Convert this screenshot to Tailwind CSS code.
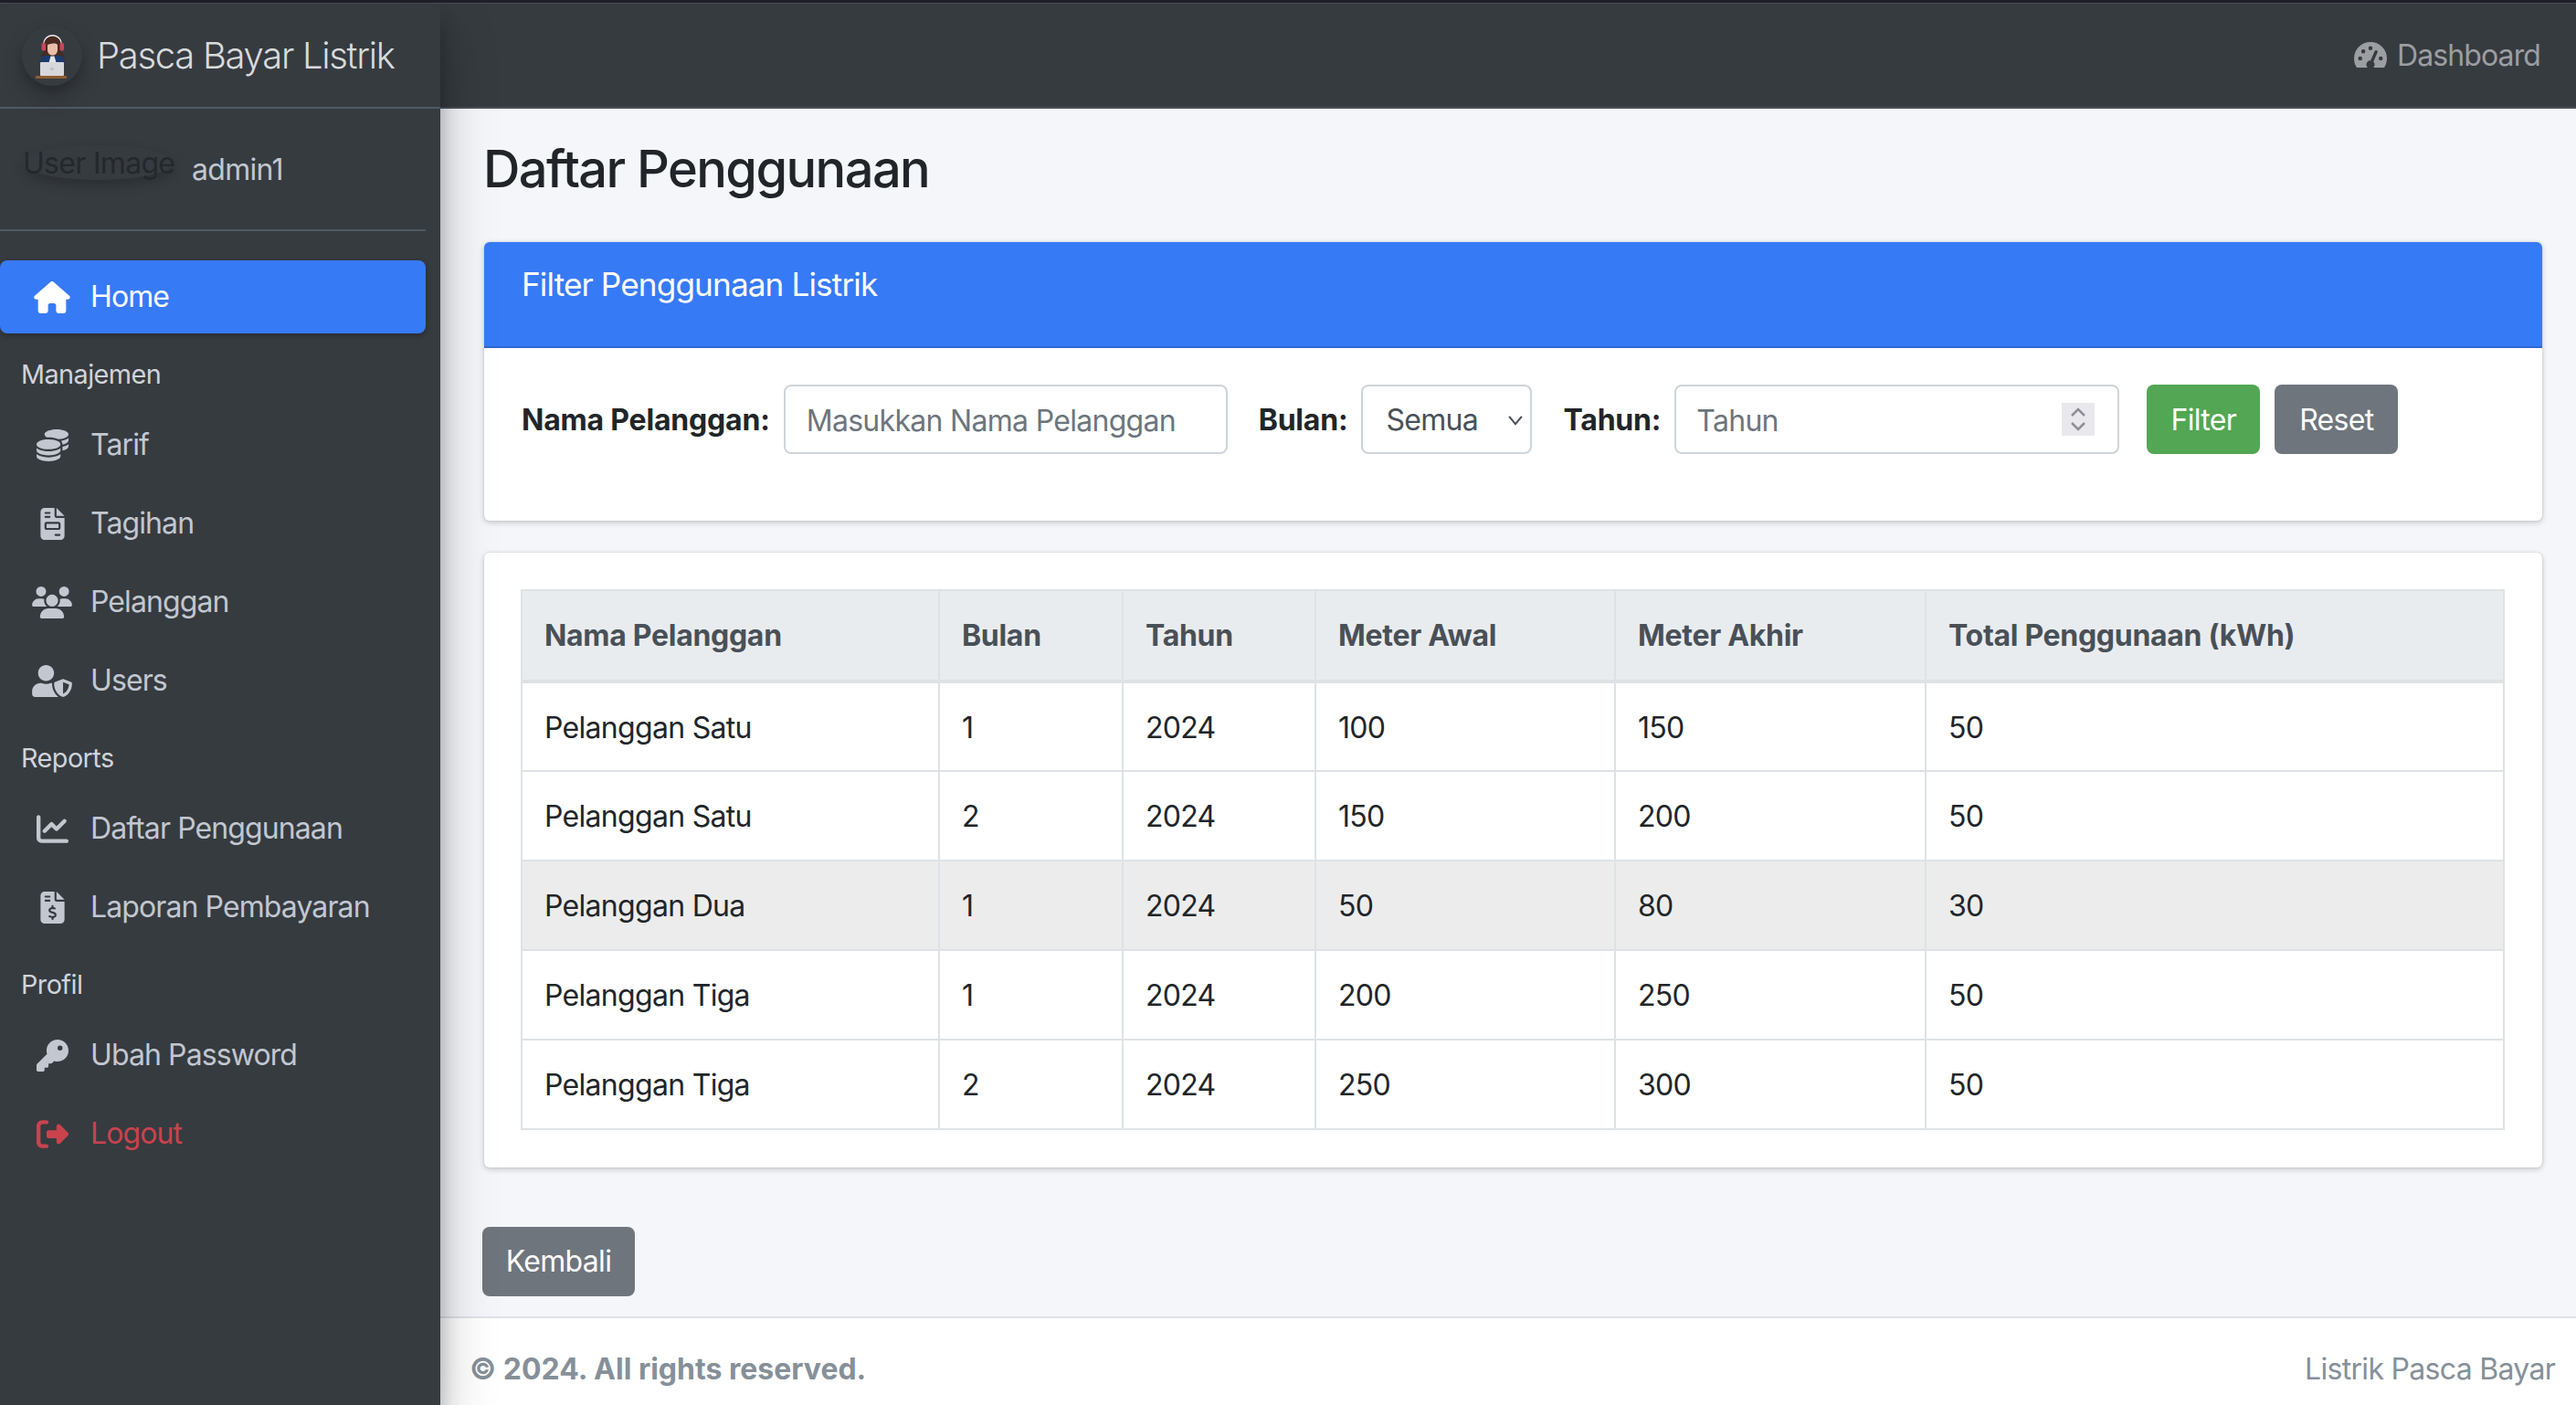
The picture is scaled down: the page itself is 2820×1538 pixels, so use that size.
<!DOCTYPE html>
<html lang="en">

<head>
  <meta charset="UTF-8">
  <meta name="viewport" content="width=device-width, initial-scale=1.0">
  <title>Daftar Penggunaan</title>
  <script src="https://cdn.jsdelivr.net/npm/@tailwindcss/browser@4"></script>
</head>

<body class="h-screen overflow-hidden flex flex-col bg-[#f4f6f9] text-[32px] leading-[48px] tracking-[-0.7px] text-[#212529] font-[family-name:Inter,sans-serif]">
  <!-- window edge -->
  <div class="h-[4px] shrink-0 bg-[#1f1f29] border-b border-[#4a4d52]"></div>

  <div class="flex flex-1 min-h-0">
    <!-- Sidebar -->
    <aside class="w-[482px] shrink-0 relative z-10 bg-[#363b40] shadow-[0_28px_56px_rgba(0,0,0,.25),0_20px_20px_rgba(0,0,0,.22)]">
      <div class="h-[115px] flex items-center pl-[24px] border-b-2 border-[#4f5962]">
        <div class="w-[66px] h-[66px] rounded-full shadow-[0_12px_24px_rgba(0,0,0,.2),0_6px_8px_rgba(0,0,0,.12)]">
          <svg viewBox="0 0 66 66" class="w-[66px] h-[66px]">
            <circle cx="33.5" cy="20.500" r="10.500" fill="#f1f1f1"/>
            <path d="M24 21a9.500 9.500 0 0 1 19 0v8l4 5-5 1H25l-5-1 4-5z" fill="#4a2a20"/>
            <rect x="21.500" y="19" width="4.500" height="8.500" rx="1.500" fill="#c9455d"/>
            <rect x="41.500" y="19" width="4.500" height="8.500" rx="1.500" fill="#c9455d"/>
            <path d="M28 21c3-1 8-3 11 0v6a5.500 5.500 0 0 1-11 0z" fill="#e9bfa8"/>
            <path d="M22 34c3-2 7-2 11 0 4-2 8-2 12 0l2 7H20z" fill="#1b3a6e"/>
            <path d="M31.500 33.500h4l2 7h-8z" fill="#e4e4e4"/>
            <rect x="20" y="40" width="26" height="15" rx="1" fill="#d6d7da"/>
            <circle cx="33" cy="47.500" r="1.800" fill="#bcbdc1"/>
            <rect x="15" y="55" width="34" height="3" fill="#8d5c31"/>
          </svg>
        </div>
        <span class="ml-[16px] text-[40px] leading-[60px] font-light tracking-[-1.3px] text-[#d9dadb]">Pasca Bayar Listrik</span>
      </div>

      <div class="h-[134px] w-[466px] flex border-b-2 border-[#4f5962] pl-[25px]">
        <div class="mt-[40px] w-[165px] h-[38px] rounded-[50%] shadow-[0_6px_14px_rgba(0,0,0,.22)] text-[#24282c] leading-[40px] whitespace-nowrap">User Image</div>
        <div class="ml-[20px] mt-[43px] text-[#c2c7d0]">admin1</div>
      </div>

      <nav class="mt-[32px] w-[466px] flex flex-col gap-[6px] text-[#c2c7d0] tracking-[-0.9px]">
        <a class="h-[80px] flex items-center rounded-[8px] bg-[#377af6] text-white shadow-[0_2px_6px_rgba(0,0,0,.3)]">
          <span class="w-[84px] ml-[15px] flex justify-center">
            <svg viewBox="0 0 576 512" class="h-[35px] w-[40px] fill-current"><path d="M575.8 255.500c0 18-15 32.100-32 32.100h-32l.7 160.200c0 2.700-.2 5.400-.5 8.100V472c0 22.100-17.900 40-40 40H456c-1.100 0-2.200 0-3.300-.1c-1.400 .1-2.800 .1-4.200 .1H416 392c-22.100 0-40-17.900-40-40V448 384c0-17.700-14.300-32-32-32H256c-17.700 0-32 14.300-32 32v64 24c0 22.100-17.900 40-40 40H160 128.100c-1.500 0-3-.1-4.500-.2c-1.200 .1-2.400 .2-3.600 .2H104c-22.100 0-40-17.900-40-40V360c0-.9 0-1.900 .1-2.800V287.600H32c-18 0-32-14-32-32.100c0-9 3-17 10-24L266.400 8c7-7 15-8 22-8s15 2 21 7L564.800 231.500c8 7 12 15 11 24z"/></svg>
          </span>
          <span>Home</span>
        </a>
        <div class="h-[70px] flex items-center pt-[8px] pl-[23px] text-[28.8px] tracking-[-0.55px] text-[#d0d4db]">Manajemen</div>
        <a class="h-[80px] flex items-center">
          <span class="w-[84px] ml-[15px] flex justify-center">
            <svg viewBox="0 0 512 512" class="h-[35px] w-[35px] fill-current"><path d="M512 80c0 18-14.300 34.600-38.400 48c-29.100 16.100-72.500 27.500-122.300 30.900c-3.700-1.800-7.400-3.500-11.300-5C300.600 137.400 248.200 128 192 128c-8.300 0-16.400 .2-24.500 .6l-1.100-.6C142.300 114.600 128 98 128 80c0-44.200 86-80 192-80S512 35.800 512 80zM160.700 161.100c10.200-.7 20.700-1.100 31.300-1.100c62.200 0 117.400 12.300 152.500 31.400C369.300 204.900 384 221.700 384 240c0 4-.7 7.900-2.100 11.700c-4.600 13.200-17 25.300-35 35.500c0 0 0 0 0 0c-.1 .1-.3 .1-.4 .2l0 0 0 0c-.3 .2-.6 .3-.9 .5c-35 19.400-90.800 32-153.600 32c-59.600 0-112.900-11.300-148.200-29.100c-1.900-.9-3.700-1.900-5.500-2.900C14.300 274.600 0 258 0 240c0-34.800 53.400-64.500 128-75.400c10.500-1.500 21.400-2.700 32.700-3.500zM416 240c0-21.900-10.600-39.900-24.100-53.400c28.300-4.400 54.200-11.400 76.200-20.500c16.300-6.800 31.500-15.200 43.900-25.500V176c0 19.300-16.500 37.100-43.800 50.900c-14.600 7.400-32.400 13.700-52.400 18.500c.1-1.800 .2-3.500 .2-5.300zm-32 96c0 18-14.300 34.600-38.400 48c-1.800 1-3.600 1.900-5.500 2.900C304.900 404.700 251.600 416 192 416c-62.800 0-118.600-12.600-153.600-32C14.300 370.600 0 354 0 336V300.600c12.500 10.300 27.600 18.700 43.900 25.500C83.400 342.600 135.800 352 192 352s108.600-9.400 148.100-25.900c7.800-3.200 15.300-6.900 22.400-10.900c6.100-3.400 11.800-7.200 17.200-11.200c1.500-1.100 2.900-2.300 4.300-3.400V304v5.700V336zm32 0V304 278.100c19-4.200 36.500-9.500 52.100-16c16.300-6.800 31.500-15.200 43.900-25.500V272c0 10.500-5 21-14.900 30.900c-16.300 16.300-45 29.700-81 38.400c.1-1.700 .1-3.500 .1-5.300zM192 448c56.200 0 108.600-9.400 148.100-25.900c16.300-6.800 31.500-15.200 43.900-25.500V432c0 44.200-86 80-192 80S0 476.200 0 432V396.600c12.500 10.300 27.600 18.700 43.900 25.500C83.400 438.600 135.800 448 192 448z"/></svg>
          </span>
          <span>Tarif</span>
        </a>
        <a class="h-[80px] flex items-center">
          <span class="w-[84px] ml-[15px] flex justify-center">
            <svg viewBox="0 0 384 512" class="h-[35px] w-[27px] fill-current"><path d="M64 0C28.700 0 0 28.700 0 64V448c0 35.300 28.700 64 64 64H320c35.300 0 64-28.700 64-64V160H256c-17.700 0-32-14.300-32-32V0H64zM256 0V128H384L256 0zM80 64h64c8.800 0 16 7.200 16 16s-7.200 16-16 16H80c-8.800 0-16-7.200-16-16s7.200-16 16-16zm0 64h64c8.800 0 16 7.200 16 16s-7.200 16-16 16H80c-8.800 0-16-7.200-16-16s7.200-16 16-16zm16 96H288c17.700 0 32 14.300 32 32v64c0 17.700-14.300 32-32 32H96c-17.700 0-32-14.300-32-32V256c0-17.700 14.300-32 32-32zm0 32v64H288V256H96zM240 416h64c8.800 0 16 7.200 16 16s-7.200 16-16 16H240c-8.800 0-16-7.200-16-16s7.200-16 16-16z"/></svg>
          </span>
          <span>Tagihan</span>
        </a>
        <a class="h-[80px] flex items-center">
          <span class="w-[84px] ml-[15px] flex justify-center">
            <svg viewBox="0 0 640 512" class="h-[35px] w-[44px] fill-current"><path d="M144 0a80 80 0 1 1 0 160A80 80 0 1 1 144 0zM512 0a80 80 0 1 1 0 160A80 80 0 1 1 512 0zM0 298.700C0 239.800 47.800 192 106.700 192h42.700c15.900 0 31 3.500 44.600 9.700c-1.300 7.200-1.900 14.700-1.900 22.300c0 38.200 16.800 72.500 43.300 96c-.2 0-.4 0-.7 0H21.300C9.600 320 0 310.400 0 298.700zM405.300 320c-.2 0-.4 0-.7 0c26.600-23.500 43.300-57.800 43.300-96c0-7.600-.7-15-1.900-22.300c13.600-6.300 28.700-9.700 44.600-9.700h42.700C592.200 192 640 239.800 640 298.700c0 11.800-9.600 21.300-21.300 21.300H405.300zM224 224a96 96 0 1 1 192 0 96 96 0 1 1 -192 0zM128 485.300C128 411.700 187.700 352 261.300 352H378.700C452.300 352 512 411.700 512 485.300c0 14.700-11.900 26.700-26.700 26.700H154.700c-14.700 0-26.700-11.900-26.700-26.700z"/></svg>
          </span>
          <span>Pelanggan</span>
        </a>
        <a class="h-[80px] flex items-center">
          <span class="w-[84px] ml-[15px] flex justify-center">
            <svg viewBox="0 0 640 512" class="h-[35px] w-[44px] fill-current"><path d="M622.300 271.100l-115.200-45c-4.100-1.600-12.600-3.700-22.200 0l-115.200 45c-10.700 4.200-17.700 14-17.700 24.900 0 111.600 68.700 188.800 132.900 213.900 9.600 3.700 18 1.600 22.200 0C558.400 489.900 640 420.500 640 296c0-10.900-7-20.700-17.700-24.900zM496 462.400V273.300l95.500 37.300c-5.600 87.100-60.900 135.400-95.500 151.800zM224 256c70.700 0 128-57.300 128-128S294.700 0 224 0 96 57.300 96 128s57.300 128 128 128zm96 40c0-2.500.8-4.800 1.100-7.200-2.500-.1-4.900-.8-7.500-.8h-16.700c-22.200 10.200-46.900 16-72.900 16s-50.600-5.800-72.900-16h-16.700C60.200 288 0 348.200 0 422.400V464c0 26.500 21.500 48 48 48h352c6.800 0 13.300-1.500 19.200-4-54-42.900-99.200-116.700-99.200-212z"/></svg>
          </span>
          <span>Users</span>
        </a>
        <div class="h-[70px] flex items-center pt-[8px] pl-[23px] text-[28.8px] tracking-[-0.55px] text-[#d0d4db]">Reports</div>
        <a class="h-[80px] flex items-center">
          <span class="w-[84px] ml-[15px] flex justify-center">
            <svg viewBox="0 0 512 512" class="h-[35px] w-[35px] fill-current"><path d="M64 64c0-17.700-14.300-32-32-32S0 46.300 0 64V400c0 44.200 35.800 80 80 80H480c17.700 0 32-14.300 32-32s-14.300-32-32-32H80c-8.800 0-16-7.200-16-16V64zm406.600 86.600c12.500-12.500 12.500-32.800 0-45.300s-32.800-12.500-45.300 0L320 210.700l-57.400-57.400c-12.500-12.500-32.800-12.500-45.300 0l-112 112c-12.500 12.500-12.500 32.800 0 45.300s32.800 12.500 45.300 0L240 221.300l57.400 57.400c12.500 12.500 32.800 12.500 45.300 0l128-128z"/></svg>
          </span>
          <span>Daftar Penggunaan</span>
        </a>
        <a class="h-[80px] flex items-center">
          <span class="w-[84px] ml-[15px] flex justify-center">
            <svg viewBox="0 0 384 512" class="h-[35px] w-[27px] fill-current"><path d="M64 0C28.700 0 0 28.700 0 64V448c0 35.300 28.700 64 64 64H320c35.300 0 64-28.700 64-64V160H256c-17.700 0-32-14.300-32-32V0H64zM256 0V128H384L256 0zM64 80c0-8.800 7.200-16 16-16h64c8.800 0 16 7.200 16 16s-7.200 16-16 16H80c-8.800 0-16-7.200-16-16zm0 64c0-8.800 7.200-16 16-16h64c8.800 0 16 7.200 16 16s-7.200 16-16 16H80c-8.800 0-16-7.200-16-16zm128 72c8.800 0 16 7.200 16 16v17.300c8.500 1.200 16.700 3.100 24.100 5.100c8.500 2.300 13.600 11 11.300 19.600s-11 13.600-19.600 11.300c-11.100-3-22-5.200-32.100-5.300c-8.400-.1-17.400 1.800-23.600 5.500c-5.700 3.400-8.100 7.300-8.100 12.800c0 3.700 1.300 6.500 7.300 10.100c6.900 4.100 16.600 7.100 29.200 10.900l.5 .1 0 0 0 0c11.300 3.400 25.300 7.600 36.300 14.600c12.100 7.600 22.400 19.700 22.700 38.200c.3 19.300-9.600 33.300-22.900 41.600c-7.700 4.800-16.400 7.600-25.100 9.100V440c0 8.800-7.200 16-16 16s-16-7.200-16-16V422.200c-11.200-2.100-21.700-5.700-30.900-8.900l0 0c-2.100-.7-4.200-1.400-6.200-2.100c-8.400-2.800-12.900-11.900-10.100-20.200s11.900-12.900 20.200-10.100c2.500 .8 4.800 1.600 7.100 2.400l0 0 0 0 0 0c13.600 4.600 24.600 8.400 36.300 8.700c9.100 .3 17.900-1.700 23.700-5.300c5.100-3.200 7.900-7.300 7.800-14c-.1-4.600-1.800-7.800-7.700-11.600c-6.800-4.300-16.500-7.400-29-11.200l-1.600-.5 0 0c-11-3.300-24.300-7.300-34.800-13.700c-12-7.200-22.600-18.900-22.700-37.300c-.1-19.400 10.800-32.800 23.800-40.500c7.500-4.400 15.800-7.200 24.100-8.700V232c0-8.800 7.200-16 16-16z"/></svg>
          </span>
          <span>Laporan Pembayaran</span>
        </a>
        <div class="h-[70px] flex items-center pt-[8px] pl-[23px] text-[28.8px] tracking-[-0.55px] text-[#d0d4db]">Profil</div>
        <a class="h-[80px] flex items-center">
          <span class="w-[84px] ml-[15px] flex justify-center">
            <svg viewBox="0 0 512 512" class="h-[35px] w-[35px] fill-current"><path d="M336 352c97.200 0 176-78.800 176-176S433.200 0 336 0S160 78.800 160 176c0 18.700 2.900 36.800 8.300 53.700L7 391c-4.500 4.500-7 10.600-7 17v80c0 13.300 10.700 24 24 24h80c13.300 0 24-10.700 24-24V448h40c13.300 0 24-10.700 24-24V384h40c6.400 0 12.500-2.500 17-7l33.300-33.300c16.900 5.400 35 8.300 53.700 8.300zM376 96a40 40 0 1 1 0 80 40 40 0 1 1 0-80z"/></svg>
          </span>
          <span>Ubah Password</span>
        </a>
        <a class="h-[80px] flex items-center text-[#c9434d]">
          <span class="w-[84px] ml-[15px] flex justify-center">
            <svg viewBox="0 0 512 512" class="h-[35px] w-[35px] fill-current"><path d="M377.900 105.900L500.700 228.700c7.200 7.200 11.300 17.100 11.300 27.300s-4.100 20.100-11.300 27.300L377.900 406.100c-6.400 6.400-15 9.900-24 9.900c-18.700 0-33.900-15.200-33.900-33.900l0-62.100-128 0c-17.700 0-32-14.300-32-32l0-64c0-17.700 14.300-32 32-32l128 0 0-62.100c0-18.700 15.200-33.900 33.900-33.900c9 0 17.600 3.600 24 9.900zM160 96L96 96c-17.700 0-32 14.300-32 32l0 256c0 17.700 14.300 32 32 32l64 0c17.700 0 32 14.300 32 32s-14.300 32-32 32l-64 0c-53 0-96-43-96-96L0 128C0 75 43 32 96 32l64 0c17.700 0 32 14.300 32 32s-14.300 32-32 32z"/></svg>
          </span>
          <span>Logout</span>
        </a>
      </nav>
    </aside>

    <!-- Main column -->
    <div class="flex-1 min-w-0 flex flex-col">
      <header class="h-[115px] shrink-0 flex items-center justify-end pr-[39px] bg-[#363b40] border-b-2 border-[#4b5158] text-[#9c9ea1]">
        <div class="h-[28px] w-[36px] overflow-hidden mb-[2px]">
          <svg viewBox="0 0 512 512" class="w-[36px] h-[36px] fill-current"><path d="M0 256a256 256 0 1 1 512 0A256 256 0 1 1 0 256zM288 96a32 32 0 1 0 -64 0 32 32 0 1 0 64 0zM256 416c35.300 0 64-28.700 64-64c0-17.400-6.900-33.100-18.100-44.600L366 161.700c5.300-12.100-.2-26.300-12.300-31.600s-26.300 .2-31.600 12.300L257.900 288c-.6 0-1.300 0-1.900 0c-35.300 0-64 28.700-64 64s28.700 64 64 64zM176 144a32 32 0 1 0 -64 0 32 32 0 1 0 64 0zM96 288a32 32 0 1 0 0-64 32 32 0 1 0 0 64zm352-32a32 32 0 1 0 -64 0 32 32 0 1 0 64 0z"/></svg>
        </div>
        <span class="ml-[11px] tracking-[-0.9px]">Dashboard</span>
      </header>

      <main class="flex-1 min-h-0 pt-[32px] pl-[48px] pr-[37px]">
        <h1 class="-ml-[1px] text-[56px] leading-[69px] font-medium tracking-[-1.6px]">Daftar Penggunaan</h1>

        <section class="mt-[45px] h-[305px] bg-white rounded-[6px] overflow-hidden shadow-[0_0_2px_rgba(0,0,0,.125),0_2px_6px_rgba(0,0,0,.2)]">
          <div class="h-[116px] bg-[#377af6] border-b-2 border-[#2e68d2] pl-[41px] pt-[22px] text-[35.2px] leading-[48px] tracking-[-0.9px] text-white">Filter Penggunaan Listrik</div>
          <form class="pt-[40px] pl-[41px] flex items-center">
            <label class="font-bold tracking-[-0.2px] mr-[15px] pt-[2px]">Nama Pelanggan:</label>
            <input type="text" placeholder="Masukkan Nama Pelanggan" class="w-[486px] h-[76px] pl-[23px] pr-[23px] pt-[2px] bg-white border-2 border-[#ced4da] rounded-[8px] placeholder:text-[#6c757d]">
            <label class="font-bold tracking-[-0.2px] ml-[34px] mr-[15px] pt-[2px]">Bulan:</label>
            <div class="relative">
              <select class="appearance-none w-[187px] h-[76px] pl-[25px] pt-[2px] bg-white border-2 border-[#ced4da] rounded-[8px] text-[#495057]">
                <option>Semua</option>
              </select>
              <svg viewBox="0 0 16 16" class="absolute right-[7px] top-[28px] w-[22px] h-[22px] fill-none stroke-[#495057] stroke-[1.500]"><path d="M3 5l5 6 5-6"/></svg>
            </div>
            <label class="font-bold tracking-[-0.2px] ml-[34px] mr-[15px] pt-[2px]">Tahun:</label>
            <div class="relative">
              <input type="text" placeholder="Tahun" class="w-[487px] h-[76px] pl-[22px] pr-[22px] pt-[2px] bg-white border-2 border-[#ced4da] rounded-[8px] placeholder:text-[#6c757d]">
              <span class="absolute right-[27px] top-[20px] w-[36px] h-[36px] bg-[#e9e9ed] flex items-center justify-center">
                <svg viewBox="0 0 36 36" class="w-[36px] h-[36px] fill-none stroke-[#8e8e98] stroke-[2.500]"><path d="M11 14l7-7 7 7M11 22l7 7 7-7"/></svg>
              </span>
            </div>
            <button type="button" class="ml-[30px] h-[76px] w-[124px] pt-[2px] rounded-[8px] bg-[#53a653] text-white">Filter</button>
            <button type="button" class="ml-[16px] h-[76px] w-[135px] pt-[2px] rounded-[8px] bg-[#6f757d] text-white">Reset</button>
          </form>
        </section>

        <section class="mt-[35px] h-[673px] bg-white rounded-[6px] pt-[40px] pl-[40px] pr-[41px] shadow-[0_0_2px_rgba(0,0,0,.125),0_2px_6px_rgba(0,0,0,.2)]">
          <table class="w-[2170px] table-fixed border-collapse [&_td]:border-2 [&_td]:border-[#dee2e6] [&_td]:px-[24px] [&_td]:pt-[2px] [&_th]:border-2 [&_th]:border-[#dee2e6] [&_th]:px-[24px] [&_th]:text-left [&_th]:font-bold [&_th]:tracking-[-0.3px]">
            <colgroup>
              <col class="w-[457px]"><col class="w-[201px]"><col class="w-[211px]"><col class="w-[328px]"><col class="w-[340px]"><col class="w-[633px]">
            </colgroup>
            <thead class="bg-[#e9ecef] text-[#495057]">
              <tr class="h-[100px] border-b-4 border-[#dee2e6]">
                <th>Nama Pelanggan</th><th>Bulan</th><th>Tahun</th><th>Meter Awal</th><th>Meter Akhir</th><th>Total Penggunaan (kWh)</th>
              </tr>
            </thead>
            <tbody>
              <tr class="h-[98px]"><td>Pelanggan Satu</td><td>1</td><td>2024</td><td>100</td><td>150</td><td>50</td></tr>
              <tr class="h-[98px]"><td>Pelanggan Satu</td><td>2</td><td>2024</td><td>150</td><td>200</td><td>50</td></tr>
              <tr class="h-[98px] bg-[#ececec]"><td>Pelanggan Dua</td><td>1</td><td>2024</td><td>50</td><td>80</td><td>30</td></tr>
              <tr class="h-[98px]"><td>Pelanggan Tiga</td><td>1</td><td>2024</td><td>200</td><td>250</td><td>50</td></tr>
              <tr class="h-[98px]"><td>Pelanggan Tiga</td><td>2</td><td>2024</td><td>250</td><td>300</td><td>50</td></tr>
            </tbody>
          </table>
        </section>

        <button type="button" class="block mt-[65px] -ml-[2px] h-[76px] w-[167px] rounded-[8px] bg-[#6f757d] text-white">Kembali</button>
      </main>

      <footer class="h-[97px] shrink-0 bg-white border-t-2 border-[#dee2e6] pt-[32px] pl-[32px] pr-[23px] flex justify-between text-[#869099]">
        <strong class="font-bold tracking-[0px]">© 2024. All rights reserved.</strong>
        <span>Listrik Pasca Bayar</span>
      </footer>
    </div>
  </div>
</body>

</html>
